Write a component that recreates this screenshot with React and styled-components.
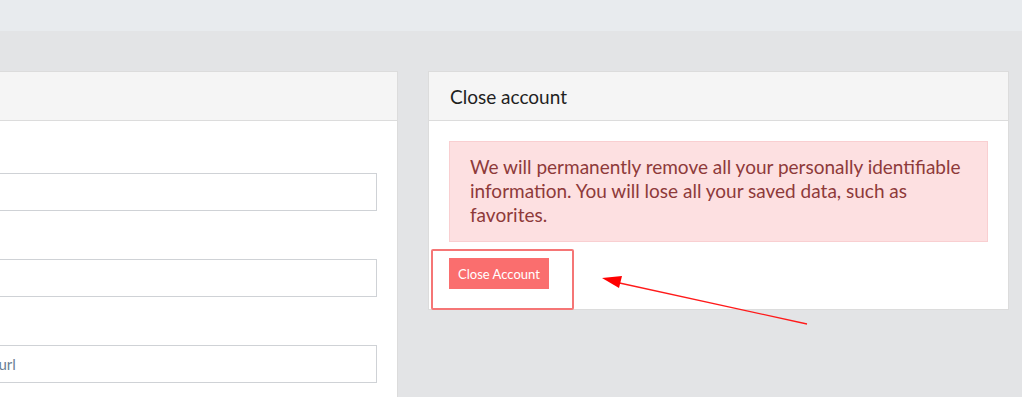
import React from 'react';
import styled, { createGlobalStyle } from 'styled-components';

const GlobalStyle = createGlobalStyle`
  html, body {
    margin: 0;
    padding: 0;
    background: #e3e4e6;
  }
  body {
    font-family: "Lato", "Noto Sans", sans-serif;
    overflow: hidden;
  }
`;

const Page = styled.div`
  position: relative;
  width: 1022px;
  height: 397px;
  overflow: hidden;
  background: #e3e4e6;
`;

const TopBar = styled.div`
  height: 31px;
  background: #e8ebee;
`;

const Columns = styled.div`
  display: grid;
  grid-template-columns: 582px 581px;
  gap: 30px;
  margin-left: -184px;
  padding-top: 40px;
  align-items: start;
`;

const Card = styled.section`
  background: #fff;
  border: 1px solid #dcdcdc;
`;

const CardHeader = styled.header`
  height: 49px;
  box-sizing: border-box;
  padding: 0 21px;
  display: flex;
  align-items: center;
  background: #f5f5f5;
  border-bottom: 1px solid #dcdcdc;
  font-size: 19px;
  color: #1f1f1f;
`;

const CardBody = styled.div`
  padding: 20px;
`;

const Field = styled.div`
  display: flex;
  flex-direction: column;
  gap: 5px;
  margin-bottom: 16px;
`;

const Label = styled.label`
  font-size: 16px;
  color: #333;
  line-height: 27px;
`;

const Input = styled.input`
  height: 38px;
  box-sizing: border-box;
  border: 1px solid #cfd2d6;
  padding: 0 12px;
  font-family: inherit;
  font-size: 15px;
  color: #6b7f95;
  outline: none;

  &::placeholder {
    color: #6b7f95;
  }
`;

const Alert = styled.div`
  background: #fde0e1;
  border: 1px solid #f9cfd1;
  padding: 13px 20px 14px;
  font-size: 19px;
  line-height: 24px;
  color: #8e3a3a;
`;

const DangerButton = styled.button`
  display: block;
  margin-top: 16px;
  width: 100px;
  height: 31px;
  border: none;
  background: #fa6e6e;
  color: #fff;
  font-family: inherit;
  font-size: 13px;
  padding: 0;
`;

const Highlight = styled.div`
  position: absolute;
  left: 431px;
  top: 249px;
  width: 139px;
  height: 57px;
  border: 2px solid #f57676;
  border-radius: 2px;
`;

const Arrow = styled.svg`
  position: absolute;
  left: 0;
  top: 0;
  pointer-events: none;
`;

export default function App() {
  return (
    <>
      <GlobalStyle />
      <Page>
        <TopBar />
        <Columns>
          <Card>
            <CardHeader>Profile</CardHeader>
            <CardBody>
              <Field>
                <Label>Name</Label>
                <Input defaultValue="" />
              </Field>
              <Field>
                <Label>Email</Label>
                <Input defaultValue="" />
              </Field>
              <Field>
                <Label>Website</Label>
                <Input placeholder="Your personal website url" />
              </Field>
            </CardBody>
          </Card>
          <Card>
            <CardHeader>Close account</CardHeader>
            <CardBody>
              <Alert>
                We will permanently remove all your personally identifiable information. You will lose
                all your saved data, such as favorites.
              </Alert>
              <DangerButton>Close Account</DangerButton>
            </CardBody>
          </Card>
        </Columns>
        <Highlight />
        <Arrow width="1022" height="397" viewBox="0 0 1022 397">
          <line x1="807" y1="324" x2="615" y2="282" stroke="#ff1a1a" strokeWidth="1.3" />
          <polygon points="602,278 622,276 619,288" fill="#ff0000" />
        </Arrow>
      </Page>
    </>
  );
}
